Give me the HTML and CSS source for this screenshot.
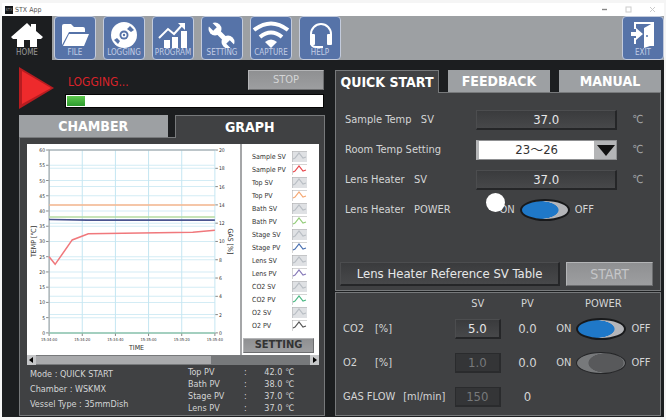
FILE: index.html
```html
<!DOCTYPE html>
<html lang="en">
<head>
  <meta charset="UTF-8" />
  <meta name="viewport" content="width=device-width, initial-scale=1.0"/>
  <title>STX App</title>
  <link rel="stylesheet" href="styles.css">
</head>
<body>
  <header class="titlebar">
    <span class="app-icon">STX</span>
    <span class="app-name">STX App</span>
    <button class="win-btn" aria-label="Minimize"><svg width="7" height="7" viewBox="0 0 7 7"><path d="M1 3.5h5" stroke="#888" stroke-width="1.4"/></svg></button>
    <button class="win-btn" aria-label="Maximize"><svg width="7" height="7" viewBox="0 0 7 7"><rect x="1" y="1" width="5" height="5" fill="none" stroke="#ccc"/></svg></button>
    <button class="win-btn" aria-label="Close"><svg width="7" height="7" viewBox="0 0 7 7"><path d="M1 1l5 5M6 1l-5 5" stroke="#ccc"/></svg></button>
  </header>

  <nav class="toolbar">
    <button class="tool home">
      <svg viewBox="0 0 42 30"><path d="M5 19L21 5l4 4V6h5v7l7 6-2 2h-4v8h-7v-7h-6v7h-7v-8H7z" fill="#fff"/></svg>
      <span>HOME</span>
    </button>
    <button class="tool">
      <svg viewBox="0 0 42 30"><path d="M8 27V8q0-2 2-2h7l3 3h9q2 0 2 2v3H15z" fill="#fff"/><path d="M15 16h20l-5 12H9z" fill="#fff"/></svg>
      <span>FILE</span>
    </button>
    <button class="tool">
      <svg viewBox="0 0 42 30"><circle cx="21" cy="17" r="13" fill="#fff"/><circle cx="21" cy="17" r="4.5" fill="#5673a8"/><circle cx="21" cy="17" r="2.6" fill="#fff"/><circle cx="21" cy="17" r="1.2" fill="#5673a8"/><path d="M24 11l3-3 4 4-3 2zM11 22l3-2 3 3-2 3z" fill="#5673a8"/></svg>
      <span>LOGGING</span>
    </button>
    <button class="tool">
      <svg viewBox="0 0 42 30"><path d="M12 22h6v8h-6zM20 19h6v11h-6zM29 13h6v17h-6z" fill="#fff"/><path d="M7 20l9-9 6 5 9-10" fill="none" stroke="#fff" stroke-width="2"/><path d="M26 5h7v7z" fill="#fff"/></svg>
      <span>PROGRAM</span>
    </button>
    <button class="tool">
      <svg viewBox="0 0 42 30"><path d="M14 11l13 13" stroke="#fff" stroke-width="5"/><circle cx="14" cy="11" r="6.5" fill="#fff"/><circle cx="27" cy="24" r="6.5" fill="#fff"/><path d="M14 11L7 4M27 24l7 7" stroke="#5673a8" stroke-width="5"/></svg>
      <span>SETTING</span>
    </button>
    <button class="tool">
      <svg viewBox="0 0 42 30"><g fill="none" stroke="#fff" stroke-width="4"><path d="M4 12q17-13 34 0"/><path d="M10 19q11-9 22 0"/></g><path d="M15 24q6-5 12 0l-6 6z" fill="#fff"/></svg>
      <span>CAPTURE</span>
    </button>
    <button class="tool">
      <svg viewBox="0 0 42 30"><path d="M12 19v-3a10 10 0 0 1 20 0v3M12 24q0 5 5 5h3" fill="none" stroke="#fff" stroke-width="2"/><rect x="11" y="16" width="5" height="11" rx="1" fill="#fff"/><rect x="28" y="16" width="5" height="11" rx="1" fill="#fff"/><rect x="18" y="28" width="6" height="2" fill="#fff"/></svg>
      <span>HELP</span>
    </button>
    <button class="tool exit">
      <svg viewBox="0 0 42 30"><path d="M13 11V5h18v22h-7M13 20v6" fill="none" stroke="#fff" stroke-width="2"/><path d="M22 10l9-5v22l-9 3z" fill="#fff"/><path d="M9 14h5v-4l7 6-7 6v-4H9z" fill="#fff"/><circle cx="25" cy="18" r="1" fill="#5673a8"/></svg>
      <span>EXIT</span>
    </button>
  </nav>

  <main>
    <section class="left">
      <div class="status">
        <svg class="play" width="35" height="42" viewBox="0 0 35 42"><path d="M0 0l35 21L0 42z" fill="#b81c20"/><path d="M3 4l29 17L3 37z" fill="#ee2a2c"/></svg>
        <div class="status-main">
          <div class="status-row">
            <span class="state">LOGGING...</span>
            <button class="gray-btn stop">STOP</button>
          </div>
          <div class="progress" role="progressbar" aria-label="Logging progress" aria-valuenow="7"><div class="bar" style="width: 7%"></div></div>
        </div>
      </div>

      <div class="tabs">
        <button class="tab">CHAMBER</button>
        <button class="tab active">GRAPH</button>
      </div>
      <div class="panel graph-panel">
        <div class="graph">
          <svg class="chart" viewBox="0 0 212 210" id="chart"></svg>
          <div class="side">
            <ul class="legend" id="legend"></ul>
            <button class="gray-btn setting">SETTING</button>
          </div>
        </div>
        <div class="scrollbar">
          <button aria-label="Scroll left"><svg width="5" height="6" viewBox="0 0 5 6"><path d="M4 0v6L0 3z"/></svg></button>
          <div class="track"><div class="thumb"></div></div>
          <button aria-label="Scroll right"><svg width="5" height="6" viewBox="0 0 5 6"><path d="M1 0v6l4-3z"/></svg></button>
        </div>
        <div class="info">
          <div class="info-mode">
            <p>Mode : QUICK START</p>
            <p>Chamber : WSKMX</p>
            <p>Vessel Type : 35mmDish</p>
          </div>
          <table class="info-pv">
            <tr><th>Top PV</th><td>:</td><td>42.0 ℃</td></tr>
            <tr><th>Bath PV</th><td>:</td><td>38.0 ℃</td></tr>
            <tr><th>Stage PV</th><td>:</td><td>37.0 ℃</td></tr>
            <tr><th>Lens PV</th><td>:</td><td>37.0 ℃</td></tr>
          </table>
        </div>
      </div>
    </section>

    <section class="right">
      <div class="tabs">
        <button class="tab active">QUICK START</button>
        <button class="tab">FEEDBACK</button>
        <button class="tab">MANUAL</button>
      </div>
      <div class="panel quick">
        <div class="field">
          <span class="field-name">Sample Temp &nbsp; SV</span>
          <button class="dark-btn">37.0</button>
          <span class="unit">℃</span>
        </div>
        <div class="field">
          <label class="field-name" for="roomTemp">Room Temp Setting</label>
          <div class="select">
            <select id="roomTemp"><option>23～26</option></select>
            <svg width="20" height="11" viewBox="0 0 20 11"><path d="M1 0h18l-9 11z" fill="#111"/></svg>
          </div>
          <span class="unit">℃</span>
        </div>
        <div class="field">
          <span class="field-name">Lens Heater &nbsp; SV</span>
          <button class="dark-btn">37.0</button>
          <span class="unit">℃</span>
        </div>
        <div class="field">
          <label class="field-name" for="lensPower">Lens Heater &nbsp; POWER</label>
          <div class="power">
            <span class="pointer"></span>
            <span>ON</span><input type="checkbox" class="switch" id="lensPower" checked><span>OFF</span>
          </div>
        </div>
        <div class="actions">
          <button class="dark-btn">Lens Heater Reference SV Table</button>
          <button class="gray-btn start">START</button>
        </div>
      </div>

      <div class="panel gas">
        <table>
          <thead>
            <tr><th class="c-name"></th><th class="c-sv">SV</th><th class="c-pv">PV</th><th class="c-power">POWER</th></tr>
          </thead>
          <tbody>
            <tr>
              <th><label class="gas-name" for="co2Power"><span>CO2</span>[%]</label></th>
              <td><button class="dark-btn">5.0</button></td>
              <td class="pv">0.0</td>
              <td><div class="power"><span>ON</span><input type="checkbox" class="switch" id="co2Power" checked><span>OFF</span></div></td>
            </tr>
            <tr>
              <th><label class="gas-name" for="o2Power"><span>O2</span>[%]</label></th>
              <td><button class="dark-btn" disabled>1.0</button></td>
              <td class="pv">0.0</td>
              <td><div class="power"><span>ON</span><input type="checkbox" class="switch" id="o2Power"><span>OFF</span></div></td>
            </tr>
            <tr>
              <th><div class="gas-name"><span>GAS FLOW</span>[ml/min]</div></th>
              <td><button class="dark-btn" disabled>150</button></td>
              <td class="pv">0</td>
              <td></td>
            </tr>
          </tbody>
        </table>
      </div>
    </section>
  </main>

  <script src="chart.js"></script>
</body>
</html>
```

FILE: styles.css
```css
* {
  box-sizing: border-box;
}
body {
  margin: 0;
  padding: 3px 2px;
  min-height: 100vh;
  display: flex;
  flex-direction: column;
  background: #f5f5f5;
  color: #d4d5d6;
  font-family: "DejaVu Sans Condensed", "DejaVu Sans", "Noto Sans CJK JP", sans-serif;
  font-size: 11px;
  line-height: 12px;
}
button {
  margin: 0;
  padding: 0;
  border: none;
  color: inherit;
  font: inherit;
  cursor: pointer;
}
p, ul {
  margin: 0;
  padding: 0;
}
th {
  font-weight: normal;
  text-align: left;
}
th, td {
  padding: 0;
}

/* title bar */
.titlebar {
  display: flex;
  align-items: center;
  height: 13px;
  padding: 0 8px 0 3px;
  background: #fff;
  color: #555;
  font-size: 7px;
}
.app-icon {
  width: 8px;
  height: 8px;
  margin-right: 2px;
  background: #15171a;
  color: #888;
  font-size: 4px;
  line-height: 8px;
  text-align: center;
}
.app-name {
  flex: 1;
}
.win-btn {
  display: flex;
  margin-left: 17px;
  background: none;
}

/* toolbar */
.toolbar {
  display: flex;
  gap: 7px;
  height: 44px;
  background: #9da0a3;
}
.tool {
  display: flex;
  flex-direction: column;
  align-items: center;
  justify-content: space-between;
  width: 42px;
  padding: 1px 0 2px;
  border: 1px solid #c3cbdc;
  border-radius: 4px;
  background: #5673a8;
  color: #c3cee6;
  font-size: 8px;
  line-height: 8px;
}
.tool svg {
  width: 42px;
  height: 30px;
}
.tool.home {
  width: 50px;
  margin-right: -5px;
  border-color: #1c1e20;
  border-radius: 0;
  background: #1c1e20;
  color: #999;
}
.tool.exit {
  margin-left: auto;
}

main {
  flex: 1;
  display: grid;
  grid-template-columns: 306fr 326fr;
  gap: 10px;
  padding: 7px 3px 1px 17px;
  background: #1c1e20;
}
.left, .right {
  display: flex;
  flex-direction: column;
  min-width: 0;
}
.right {
  padding-top: 3px;
}

/* logging status */
.status {
  display: flex;
  gap: 11px;
  margin-bottom: 6px;
}
.status-main {
  flex: 1;
  padding: 3px 1px 0 0;
}
.status-row {
  display: flex;
  justify-content: space-between;
  align-items: center;
  margin-bottom: 4px;
}
.state {
  padding: 4px 0 0 3px;
  color: #d8232a;
  font-size: 12px;
}
.gray-btn {
  border: 1px solid #b4b5b7;
  border-right-color: #6d6e70;
  border-bottom-color: #6d6e70;
  background: linear-gradient(#8f9092, #9d9ea0);
}
.stop {
  width: 76px;
  height: 20px;
}
.progress {
  height: 14px;
  padding: 1px;
  border: 1px solid #050505;
  background: #fff;
}
.bar {
  height: 10px;
  background: linear-gradient(#5fc94f, #2d9a2f);
}

/* tabs */
.tabs {
  display: flex;
  gap: 7px;
  height: 22px;
}
.tab {
  flex: 1;
  background: #9da0a3;
  color: #fff;
  font-size: 14px;
  font-weight: bold;
  white-space: nowrap;
}
.tab.active {
  height: 23px;
  border: 1px solid #77797b;
  border-bottom: none;
  background: #404143;
  z-index: 1;
}
.panel {
  border: 1px solid #77797b;
  background: #404143;
}

/* graph */
.graph-panel {
  flex: 1;
  padding: 6px 5px 0 7px;
}
.graph {
  display: grid;
  grid-template-columns: 213fr 77fr;
  gap: 2px;
  background: #a5a6a8;
}
.chart {
  display: block;
  width: 100%;
  background: #fff;
}
.chart text {
  fill: #333;
  font-size: 5px;
}
.chart .time {
  font-size: 4px;
}
.chart .axis-title {
  font-size: 7px;
}
.side {
  display: flex;
  flex-direction: column;
  justify-content: space-between;
  padding: 6px 5px 2px 1px;
  background: #fff;
}
.legend {
  padding: 0 7px 0 9px;
  list-style: none;
  color: #333;
  font-size: 7px;
}
.legend li {
  display: flex;
  align-items: center;
  justify-content: space-between;
  height: 13px;
  white-space: nowrap;
}
.setting {
  height: 15px;
  color: #333;
  font-weight: bold;
}
.scrollbar {
  display: flex;
  height: 10px;
  background: #c5c6c8;
}
.scrollbar button {
  display: flex;
  align-items: center;
  justify-content: center;
  width: 9px;
  background: #c5c6c8;
}
.track {
  flex: 1;
  padding: 1px 0;
  background: #77797b;
}
.thumb {
  width: 64%;
  height: 8px;
  background: #a9aaac;
}
.info {
  display: flex;
  justify-content: space-between;
  padding: 1px 25px 0 3px;
  font-size: 9px;
}
.info-mode {
  padding-top: 1px;
  line-height: 15px;
}
.info-pv {
  width: 106px;
  border-collapse: collapse;
}
.info-pv td:last-child {
  text-align: right;
}

/* quick start */
.right .tabs {
  gap: 9px;
}
.quick {
  display: flex;
  flex-direction: column;
  padding: 12px 7px 4px 4px;
}
.field {
  display: grid;
  grid-template-columns: 132fr 142fr 36fr;
  align-items: center;
  height: 30px;
  padding-left: 5px;
}
.dark-btn {
  height: 20px;
  border: 1px solid #4c4d4f;
  border-right: 2px solid #252628;
  border-bottom: 2px solid #252628;
  background: linear-gradient(#3a3b3d, #47484a);
  color: #e6e7e8;
  font-size: 13px;
}
.dark-btn:disabled {
  border-color: #2a2b2d;
  background: #343537;
  color: #77797b;
}
.unit {
  padding-left: 15px;
  color: #a5a6a8;
}
.select {
  position: relative;
}
.select select {
  display: block;
  width: 100%;
  height: 20px;
  padding: 0 22px 0 0;
  border: 1px solid #8f9092;
  border-left: 3px solid #b4b5b7;
  border-radius: 0;
  appearance: none;
  background: linear-gradient(90deg, #fff 84%, #b4b5b7 84%);
  color: #333;
  font: inherit;
  font-size: 13px;
  text-align: center;
  text-align-last: center;
}
.select svg {
  position: absolute;
  top: 5px;
  right: 1px;
  pointer-events: none;
}
.power {
  position: relative;
  display: flex;
  align-items: center;
  justify-content: center;
  gap: 5px;
}
.pointer {
  position: absolute;
  top: -6px;
  left: 10px;
  width: 19px;
  height: 19px;
  border-radius: 50%;
  background: #fff;
}
.switch {
  appearance: none;
  width: 50px;
  height: 22px;
  margin: 0;
  border: 1px solid #232426;
  border-radius: 50%;
  background: radial-gradient(ellipse 18px 10px at 29px 10px, #58595b 95%, transparent), #77797b;
}
.switch:checked {
  border: 2px solid #18191b;
  background: radial-gradient(ellipse 19px 9px at 18px 9px, #1f78c8 95%, transparent), #b4b5b9;
}
.actions {
  display: grid;
  grid-template-columns: 221fr 87fr;
  gap: 6px;
  margin-top: 37px;
}
.actions button {
  height: 24px;
}
.start {
  color: #c5c6c8;
  font-size: 14px;
}

/* gas control */
.gas {
  flex: 1;
  margin-top: 1px;
  padding: 2px 7px 0;
}
.gas table {
  width: 100%;
  border-collapse: collapse;
  table-layout: fixed;
}
.gas thead th {
  height: 17px;
  text-align: center;
}
.c-name {
  width: 36%;
}
.c-sv {
  width: 15%;
}
.c-pv {
  width: 17%;
}
.gas tbody tr {
  height: 34px;
}
.gas td {
  text-align: center;
}
.gas td .dark-btn {
  width: 100%;
}
.gas-name {
  display: flex;
  gap: 8px;
  white-space: nowrap;
}
.gas-name span {
  min-width: 24px;
}
.gas .pv {
  font-size: 13px;
}
```

FILE: chart.js
```js
const chart = document.getElementById('chart');
const left = 22, right = 187, top0 = 6, bottom = 188;
let out = '';

function tempY(t) {
  return bottom - t * (bottom - top0) / 60;
}

function gasY(g) {
  return bottom - g * (bottom - top0) / 20;
}

// temperature axis
for (let t = 0; t <= 60; t += 5) {
  const y = tempY(t);
  out += `<path d="M${left} ${y}H${right}" stroke="#d3ecf5"/>`;
  out += `<path d="M${left - 3} ${y}h3" stroke="#888"/>`;
  out += `<text x="${left - 4}" y="${y + 2}" text-anchor="end">${t}</text>`;
}

// gas axis
for (let g = 0; g <= 20; g += 2) {
  const y = gasY(g);
  out += `<path d="M${left} ${y}H${right}" stroke="#d3ecf5"/>`;
  out += `<path d="M${right} ${y}h3" stroke="#888"/>`;
  out += `<text x="${right + 4}" y="${y + 2}">${g}</text>`;
}

// time axis
const times = ['15:34:00', '15:34:20', '15:34:40', '15:35:00', '15:35:20', '15:35:40'];
times.forEach((time, i) => {
  const x = left + i * 33;
  out += `<path d="M${x} ${top0}V${bottom}" stroke="#c5e6f2"/>`;
  out += `<path d="M${x} ${bottom}v3" stroke="#888"/>`;
  out += `<text class="time" x="${x}" y="${bottom + 8}" text-anchor="middle">${time}</text>`;
});

out += `<path d="M${left} ${bottom}V${top0}H${right}" fill="none" stroke="#999"/>`;

// series
const series = [
  ['#f9b68c', [[22, 42], [187, 42]]],
  ['#b5dba0', [[22, 38], [187, 38]]],
  ['#4a5590', [[22, 37.2], [60, 37], [187, 37]]],
  ['#f0787c', [[22, 25], [28, 22.5], [45, 30.5], [61, 32.5], [165, 33], [187, 33.7]]],
  ['#8fc4ac', [[22, 0], [187, 0]]]
];
series.forEach(([color, points]) => {
  const line = points.map(([x, t]) => `${x},${tempY(t)}`).join(' ');
  out += `<polyline points="${line}" fill="none" stroke="${color}" stroke-width="1.5"/>`;
});

out += '<text class="axis-title" x="109" y="205" text-anchor="middle">TIME</text>';
out += '<text class="axis-title" transform="translate(9 97) rotate(-90)" text-anchor="middle">TEMP [℃]</text>';
out += '<text class="axis-title" transform="translate(200 97) rotate(90)" text-anchor="middle">GAS [%]</text>';
chart.innerHTML = out;

// legend, one SV and one PV entry for each sensor
const sensors = [
  ['Sample', '#e8474c'],
  ['Top', '#f5a873'],
  ['Bath', '#92cc78'],
  ['Stage', '#4a70b0'],
  ['Lens', '#8678b8'],
  ['CO2', '#4bb883'],
  ['O2', '#555555']
];

function legendItem(name, color, bg) {
  return `<li>${name}<svg width="15" height="11" viewBox="0 0 15 11">
    <rect width="15" height="11" fill="${bg}"/>
    <path d="M0 11V0h15" fill="none" stroke="#aaa"/>
    <path d="M1 8l2-1 4-5 4 5 3-1" fill="none" stroke="${color}" stroke-width="1.2"/>
  </svg></li>`;
}

document.getElementById('legend').innerHTML = sensors.map(([name, color]) =>
  legendItem(name + ' SV', '#b9bec4', '#dfe1e4') + legendItem(name + ' PV', color, '#fff')
).join('');
```
